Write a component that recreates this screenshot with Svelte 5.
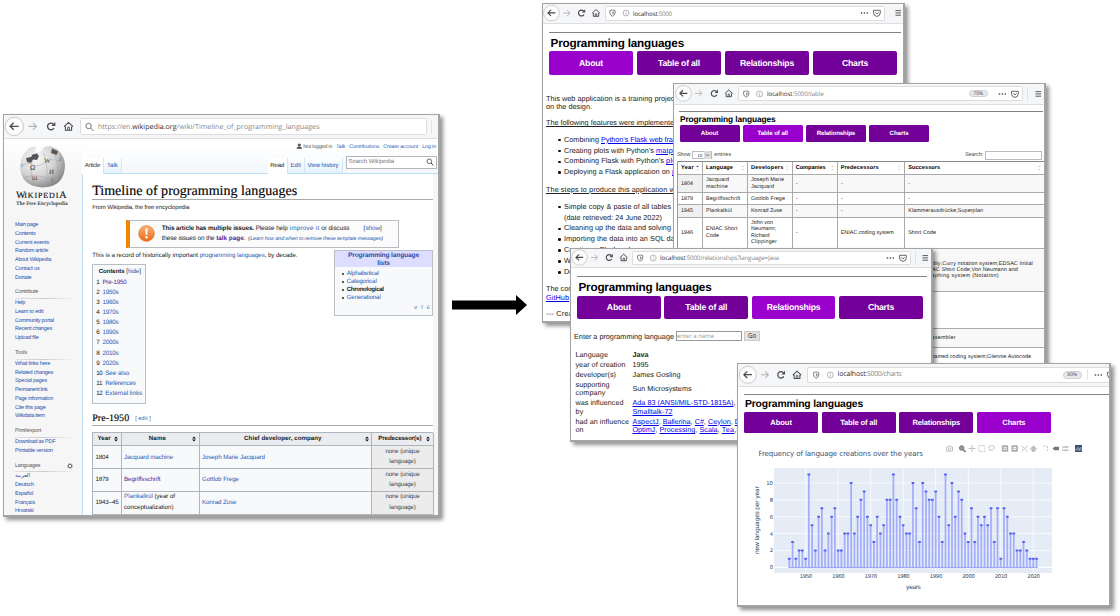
<script>
  // Spreads a run of text over a given width by adjusting its letter spacing.
  function fit(node, width) {
    if (!width) return;
    node.style.letterSpacing = '0px';
    const natural = node.getBoundingClientRect().width;
    const gap = (width - natural) / Math.max(1, node.textContent.length);
    node.style.letterSpacing = gap.toFixed(3) + 'px';
  }

  const sections = [
    { links: [['Main page', 23], ['Contents', 20.5], ['Current events', 34], ['Random article', 33], ['About Wikipedia', 36], ['Contact us', 24.5], ['Donate', 16.3]] },
    { title: 'Contribute', w: 23, links: [['Help', 10], ['Learn to edit', 28.3], ['Community portal', 38.7], ['Recent changes', 37], ['Upload file', 23.5]] },
    { title: 'Tools', w: 12, links: [['What links here', 35], ['Related changes', 38], ['Special pages', 32], ['Permanent link', 32.5], ['Page information', 38], ['Cite this page', 30.5], ['Wikidata item', 29.5]] },
    { title: 'Print/export', w: 26, links: [['Download as PDF', 40.3], ['Printable version', 37.7]] },
    { title: 'Languages', w: 25.3, gear: true, links: [['العربية', 0], ['Deutsch', 19], ['Español', 18], ['Français', 20], ['Hrvatski', 18.7]] }
  ];
  const toc = [['Pre-1950', 24.3], ['1950s', 16], ['1960s', 16], ['1970s', 16], ['1980s', 16], ['1990s', 16], ['2000s', 16], ['2010s', 16], ['2020s', 16], ['See also', 24], ['References', 30.5], ['External links', 37]];
  const tabs = ['About', 'Table of all', 'Relationships', 'Charts'];

  const counts = [1, 3, 1, 2, 2, 1, 11, 5, 2, 6, 7, 2, 4, 6, 7, 2, 2, 4, 4, 10, 4, 6, 8, 9, 6, 5, 3, 6, 4, 5, 8, 8, 11, 8, 6, 5, 4, 4, 10, 7, 3, 10, 9, 8, 8, 9, 6, 3, 11, 5, 10, 6, 9, 8, 4, 3, 7, 3, 6, 5, 6, 5, 7, 3, 7, 1, 7, 6, 4, 4, 2, 2, 3, 2, 1, 1, 1];
  const px = (year) => 67.6 + (year - 1950) * 3.253;
  const py = (n) => 124.3 - n * 8.43;
  const decades = [1950, 1960, 1970, 1980, 1990, 2000, 2010, 2020];

  const rows = [
    { h: 18, c: [['1804'], ['Jacquard', 'machine'], ['Joseph Marie', 'Jacquard'], ['-'], ['-'], ['-']] },
    { h: 12.2, c: [['1879'], ['Begriffsschrift'], ['Gottlob Frege'], ['-'], ['-'], ['-']] },
    { h: 12.3, c: [['1945'], ['Plankalkül'], ['Konrad Zuse'], ['-'], ['-'], ['Klammerausdrücke;Superplan']] },
    { h: 31, c: [['1946'], ['ENIAC Short', 'Code'], ['John von', 'Neumann;', 'Richard', 'Clippinger'], ['-'], ['ENIAC coding system'], ['Short Code']] },
    { h: 43.6, far: 920.7, c: [[], [], [], [], [], ['sembly;Curry notation system;EDSAC Initial', 'ENIAC Short Code;Von Neumann and', 'ographing system (Notation)']] },
    { h: 37, c: [[], [], [], [], [], []] },
    { h: 18.6, far: 926, c: [[], [], [], [], [], ['Assembler']] },
    { h: 19, far: 926, c: [[], [], [], [], [], ['nnamed coding system;Glennie Autocode']] }
  ];
  const widths = {
    'Jacquard': 23, 'machine': 22, 'Joseph Marie': 33, 'Begriffsschrift': 34.5, 'Gottlob Frege': 34, 'Plankalkül': 26, 'Konrad Zuse': 31,
    'Klammerausdrücke;Superplan': 75, 'ENIAC Short': 31.5, 'Neumann;': 25, 'Clippinger': 26, 'ENIAC coding system': 53, 'Short Code': 28,
    'sembly;Curry notation system;EDSAC Initial': 110, 'ENIAC Short Code;Von Neumann and': 95, 'ographing system (Notation)': 76,
    'Assembler': 27.5, 'nnamed coding system;Glennie Autocode': 103
  };
</script>

{#snippet t(text, w, cls)}<span class="t {cls}" use:fit={w}>{text}</span>{/snippet}

{#snippet nav(width, height, cy, xs, s)}
  <svg class="nav" {width} {height} fill="none" stroke="#4a4a4f" stroke-width="1">
    <g transform="translate({xs[0]} {cy}) scale({s})">
      <circle r="8.3" fill="#fdfdfd" stroke="#b8b8bb" stroke-width=".7" />
      <path d="M4-.1H-3.6M-.5-3.3L-3.8-.1L-.5 3.1" stroke-width="1.2" />
    </g>
    <g transform="translate({xs[1]} {cy}) scale({s})" stroke="#b3b3b6"><path d="M-3.6 0H3.4M.5-3.1L3.6 0L.5 3.1" /></g>
    <g transform="translate({xs[2]} {cy}) scale({s})">
      <path d="M2.7 1.5A3.1 3.1 0 1 1 2.2-2.1" stroke-width="1.2" />
      <path d="M3.9-4V-.4H.3Z" fill="#4a4a4f" stroke="none" />
    </g>
    <g transform="translate({xs[3]} {cy}) scale({s})">
      <path d="M-4.1.2L0-3.6L4.1.2M-2.8 0V3.5H2.8V0" /><path d="M-.7 3.4V.8H.8V3.4" stroke-width=".8" />
    </g>
  </svg>
{/snippet}

{#snippet siteIcons(w, a, b)}
  <svg class="nav" width={w} height="14" fill="none" stroke="#66666b" stroke-width=".8">
    <path transform="translate({a} 7)" d="M0-3.1L2.6-2.4V0Q2.4 2.3 0 3.3Q-2.4 2.3-2.6 0V-2.4Z" />
    <path transform="translate({a} 7)" d="M0-1.6V1.8Q1.3.9 1.3-.1V-1.3Z" fill="#77777b" stroke="none" />
    <g transform="translate({b} 7)" stroke="#9a9a9e" stroke-width=".7"><circle r="3" /><path d="M0-.5V1.8M0-1.7V-1" /></g>
  </svg>
{/snippet}

{#snippet pageIcons()}
  <svg class="nav" width="24" height="14" fill="none" stroke="#55555a">
    <path d="M.8 7H2.2M3.7 7H5.1M6.6 7H8" stroke-width="1.3" />
    <path d="M13.5 4.3H20.3V6.8Q20 10.2 16.9 10.4Q13.8 10.2 13.5 6.8ZM15.2 6.3L16.9 8L18.6 6.3" stroke-width=".9" />
  </svg>
{/snippet}

{#snippet menuIcon()}
  <svg class="ham" width="7" height="8"><path d="M.5 1.6H6M.5 3.9H6M.5 6.2H6" stroke="#4a4a4e" stroke-width=".9" /></svg>
{/snippet}

{#snippet tabBar(active, ws)}
  <nav class="tabs">
    {#each tabs as tab, i}<span class:on={i === active}>{@render t(tab, ws[i])}</span>{/each}
  </nav>
{/snippet}

<main class="desk">
  <section class="win wiki">
    <div class="bar">
      {@render nav(76, 23, 11.4, [10.3, 28.5, 47, 64.5], 1.1)}
      <div class="url">
        <svg width="17" height="16" fill="none" stroke="#77777b"><circle cx="7.6" cy="7" r="2.7" /><path d="M9.6 9L12.6 12" /></svg>
        {@render t('https://en.', 34.3)}{@render t('wikipedia.org', 44.3, 'dark')}{@render t('/wiki/Timeline_of_programming_languages', 143)}
      </div>
      <i class="sep"></i>
    </div>
    <div class="wbody">
      <aside>
        <svg class="globe" width="56" height="47">
          <defs><radialGradient id="ball" cx=".35" cy=".3" r=".78"><stop offset="0" stop-color="#f9f9f9" /><stop offset=".55" stop-color="#d3d3d3" /><stop offset="1" stop-color="#7d7d7d" /></radialGradient></defs>
          <path d="M10 7L14 3L19 1.500L21 3L20 7L25 7.500L28 4L29 2L35 1L42 4Q50 11 50 21Q49 42 27.500 42.500Q6 41 5 22Q5.500 13 10 7Z" fill="url(#ball)" />
          <path d="M11 13L16 12L17.500 9.500L22 8.500L24 11L22 15L18 14.500L16 18L12 17ZM37 3.500L43 6.500L41.500 10L36 8Z" fill="#555" />
          <g fill="none" stroke="#a5a5a5" stroke-width=".5"><path d="M5.500 20Q14 17 18 20T31 17T49.500 20M8 33Q18 29 28 32T47 29M17 16Q14 28 20 41M29 8Q34 24 31 42M40 10Q45 22 41 37" /></g>
          <g font-family="Liberation Serif" font-size="7" fill="#444"><text x="15" y="24.500">Ω</text><text x="29" y="18">W</text><text x="34" y="28.500">И</text><text x="17" y="35">ш</text><text x="6.500" y="22" font-size="5">ı</text><text x="44" y="16" font-size="5">J</text><text x="36" y="37" font-size="5">?</text></g>
        </svg>
        <div class="brand">{@render t('W', 8.3, 'big')}{@render t('IKIPEDI', 35)}{@render t('A', 7.8, 'big')}</div>
        <div class="motto">{@render t('The Free Encyclopedia', 51.5)}</div>
        {#each sections as s}
          {#if s.title}
            <h3>{@render t(s.title, s.w)}
              {#if s.gear}<svg width="6" height="6"><circle cx="3" cy="3" r="1.800" fill="none" stroke="#666" stroke-width="1" /><circle cx="3" cy="3" r="2.600" fill="none" stroke="#777" stroke-width=".6" stroke-dasharray="1 1" /></svg>{/if}
            </h3>
          {/if}
          {#each s.links as [l, w]}<a>{@render t(l, w)}</a>{/each}
        {/each}
      </aside>
      <div class="wmain">
        <header>
          <div class="personal">
            <svg width="7" height="7"><circle cx="3.300" cy="2" r="1.600" fill="#555" /><path d="M.5 5.800Q.5 4 2.500 3.700H4.200Q6 4 6 5.800Z" fill="#444" /></svg>
            <span class="muted">{@render t('Not logged in', 29)}</span>{@render t('Talk', 9, 'a')}{@render t('Contributions', 30, 'a')}{@render t('Create account', 35, 'a')}{@render t('Log in', 13.7, 'a')}
          </div>
          <div class="wtabs">
            <span class="cur" style:width="22.5px">{@render t('Article', 15.3)}</span><span style:width="17.5px">{@render t('Talk', 10.8)}</span>
            <b></b>
            <span class="cur" style:width="20.5px">{@render t('Read', 14)}</span><span style:width="16.5px">{@render t('Edit', 10.3)}</span><span style:width="38px">{@render t('View history', 31)}</span>
            <div class="search">{@render t('Search Wikipedia', 45.5)}<svg width="8" height="8" fill="none" stroke="#444"><circle cx="3.300" cy="3.300" r="2.300" stroke-width=".8" /><path d="M5 5L7.300 7.300" /></svg></div>
          </div>
        </header>
        <article>
          <h1>{@render t('Timeline of programming languages', 205)}</h1>
          <p class="from">{@render t('From Wikipedia, the free encyclopedia', 97)}</p>
          <div class="notice">
            <svg width="17" height="17"><defs><linearGradient id="or" x2="0" y2="1"><stop offset="0" stop-color="#fbb16f" /><stop offset="1" stop-color="#e8691a" /></linearGradient></defs><circle cx="8.500" cy="8.500" r="7.900" fill="url(#or)" stroke="#e5803a" stroke-width=".6" /><path d="M7.300 3.500H9.700L9.200 9.900H7.800Z" fill="#fff" /><circle cx="8.500" cy="12.200" r="1.200" fill="#fff" /></svg>
            <div>
              <div class="nl"><b>{@render t('This article has multiple issues.', 92.3)}</b>{@render t(' Please help ', 35.5)}{@render t('improve it', 30, 'a')}{@render t(' or discuss', 30)}<span class="show">{@render t('[', 2)}{@render t('show', 14.5, 'a')}{@render t(']', 2)}</span></div>
              <div class="nl">{@render t('these issues on the ', 54.5)}<b>{@render t('talk page', 27.5, 'v')}</b>{@render t('.', 4.5)}<em>{@render t('(', 2)}{@render t('Learn how and when to remove these template messages', 131, 'a')}{@render t(')', 1.7)}</em></div>
            </div>
          </div>
          <div class="split">
            <div>
              <p class="rec">{@render t('This is a record of historically important ', 107.5)}{@render t('programming languages', 65, 'a')}{@render t(', by decade.', 32.7)}</p>
              <div class="toc">
                <div class="tt"><b>{@render t('Contents', 26)}</b>{@render t('[', 1.7)}{@render t('hide', 11.3, 'a')}{@render t(']', 1.7)}</div>
                {#each toc as [l, w], i}<div>{@render t(i + 1 + '', i > 8 ? 6 : 3.2)}<span class:v={!i} class="a">{@render t(l, w)}</span></div>{/each}
              </div>
            </div>
            <div class="info">
              <div class="ih"><span>{@render t('Programming language', 71)}</span><span>{@render t('lists', 12.5)}</span></div>
              <ul>
                <li class="a">{@render t('Alphabetical', 32)}</li><li class="a">{@render t('Categorical', 30)}</li><li><b>{@render t('Chronological', 37)}</b></li><li class="a">{@render t('Generational', 34)}</li>
              </ul>
              <div class="vte">{@render t('V · T · E', 16)}</div>
            </div>
          </div>
          <h2>{@render t('Pre-1950', 37)}<span class="ed">[ {@render t('edit', 9.7, 'a')} ]</span></h2>
          <div class="wt">
            {#each [['Year', 13.3], ['Name', 17.3], ['Chief developer, company', 77.5], ['Predecessor(s)', 43]] as [l, w]}
              <div class="th"><div class="lab">{@render t(l, w)}</div><svg width="4" height="6"><path d="M2 .5L3.900 2.600H.1ZM2 5.500L.1 3.400H3.900Z" fill="#111" /></svg></div>
            {/each}
            <div>{@render t('1804', 13)}</div><div class="a">{@render t('Jacquard machine', 49)}</div><div class="a">{@render t('Joseph Marie Jacquard', 63)}</div><div class="none"><span>{@render t('none (unique', 34.3)}</span><span>{@render t('language)', 26.5)}</span></div>
            <div>{@render t('1879', 13)}</div><div class="v">{@render t('Begriffsschrift', 36.5)}</div><div class="a">{@render t('Gottlob Frege', 37)}</div><div class="none"><span>{@render t('none (unique', 34.3)}</span><span>{@render t('language)', 26.5)}</span></div>
            <div>{@render t('1943–45', 23)}</div><div class="two"><span>{@render t('Plankalkül', 29, 'a')}{@render t(' (year of', 22)}</span><span>{@render t('conceptualization)', 49.5)}</span></div><div class="a">{@render t('Konrad Zuse', 34.3)}</div><div class="none"><span>{@render t('none (unique', 34.3)}</span><span>{@render t('language)', 26.5)}</span></div>
            <div></div><div></div><div></div><div class="none"></div>
          </div>
        </article>
      </div>
    </div>
  </section>

  <svg class="arrow" width="77" height="24"><path d="M1 7.500H65V2L76 12L65 22V16.500H1Z" fill="#000" /></svg>

  <section class="win app about">
    <div class="bar">
      {@render nav(62, 19, 9, [8.5, 23.7, 38.5, 53], 0.95)}
      <div class="url">{@render siteIcons(27, 6.5, 20)}{@render t('localhost', 24.5, 'dark')}{@render t(':5000', 14.3)}<b></b>{@render pageIcons()}</div>
      <i class="sep"></i>{@render menuIcon()}
    </div>
    <hr />
    <h4>{@render t('Programming languages', 133.5)}</h4>
    {@render tabBar(0, [24, 42, 54, 26])}
    <div class="text">
      <p>{@render t('This web application is a training project', 130.5)}<br />{@render t('on the design.', 46)}</p>
      <p class="u">{@render t('The following features were implemented', 132)}</p>
      <ul>
        <li>{@render t('Combining ', 37)}{@render t("Python's Flask web framework", 97, 'k')}</li>
        <li>{@render t("Creating plots with Python's ", 92)}{@render t('matplotlib', 33.5, 'k')}</li>
        <li>{@render t("Combining Flask with Python's ", 102)}{@render t('plotly', 19, 'k')}</li>
        <li>{@render t('Deploying a Flask application on ', 108)}{@render t('python', 22, 'k')}</li>
      </ul>
      <p class="u s2">{@render t('The steps to produce this application were', 139.5)}</p>
      <ul>
        <li>{@render t('Simple copy & paste of all tables from', 124)}</li>
        <li class="bare">{@render t('(date retrieved: 24 June 2022)', 98)}</li>
        <li>{@render t('Cleaning up the data and solving', 107)}</li>
        <li>{@render t('Importing the data into an SQL data', 117)}</li>
        <li>Creating a Flask web</li>
        <li>Writing the</li>
        <li>Deploying</li>
      </ul>
      <p class="s3">{@render t('The code is', 37.5)}<br />{@render t('GitHub', 23, 'k')}</p>
      <p class="s4">{@render t('--- Created', 38)}</p>
    </div>
  </section>

  <section class="win app table">
    <div class="bar">
      {@render nav(64, 20, 9.4, [9.5, 24.5, 40.3, 54.8], 0.95)}
      <div class="url">{@render siteIcons(28, 7.2, 20.5)}{@render t('localhost', 25.5, 'dark')}{@render t(':5000/table', 31)}<b></b><em>70%</em>{@render pageIcons()}</div>
      <i class="sep"></i>{@render menuIcon()}
    </div>
    <hr />
    <h4>{@render t('Programming languages', 95.5)}</h4>
    {@render tabBar(1, [17.5, 30.5, 38.5, 19])}
    <div class="ctl"><span>{@render t('Show', 13.3)}</span><i class="sel"><s>10</s><svg width="7" height="8"><rect width="7" height="8" fill="#ddd" /><path d="M1.800 3.200L3.500 5L5.200 3.200" fill="none" stroke="#555" stroke-width=".7" /></svg></i><span>{@render t('entries', 17)}</span><b></b><span>{@render t('Search:', 18)}</span><i class="inp"></i></div>
    <div class="dt">
      {#each [['Year', 13], ['Language', 27], ['Developers', 32.5], ['Companies', 30], ['Predecessors', 38], ['Successors', 32]] as [l, w], i}
        <div class="hd">{@render t(l, w)}<svg width="3" height="6"><path d="M1.500 .6L2.800 2H.2Z" fill={i ? '#ccc' : '#444'} /><path d="M1.500 5.400L.2 4H2.800Z" fill={i ? '#ccc' : '#ddd'} /></svg></div>
      {/each}
      {#each rows as r, ri}
        {#each r.c as cell, ci}
          <div class:odd={ri % 2 === 0} class:yr={ci === 0} style:height="{r.h}px" style:padding-left={ci === 5 && r.far ? r.far - 903 + 'px' : undefined}>
            {#each cell as line}<span>{@render t(line, widths[line])}</span>{/each}
          </div>
        {/each}
      {/each}
    </div>
  </section>

  <section class="win app rel">
    <div class="bar">
      {@render nav(61, 18, 8.5, [8.5, 23.3, 38.2, 52.7], 0.93)}
      <div class="url">{@render siteIcons(27, 7.2, 20.2)}{@render t('localhost', 25.3, 'dark')}{@render t(':5000/relationships?language=Java', 93.5)}<b></b>{@render pageIcons()}</div>
      <i class="sep"></i>{@render menuIcon()}
    </div>
    <hr />
    <h4>{@render t('Programming languages', 133)}</h4>
    {@render tabBar(2, [24, 42, 53.5, 26])}
    <div class="form">{@render t('Enter a programming language', 100)}<i>{@render t('enter a name', 37)}</i><button>Go</button></div>
    <dl>
      <dt>{@render t('Language', 32.5)}</dt><dd><b>{@render t('Java', 16)}</b></dd>
      <dt>{@render t('year of creation', 50)}</dt><dd>{@render t('1995', 16)}</dd>
      <dt>{@render t('developer(s)', 40.5)}</dt><dd>{@render t('James Gosling', 48)}</dd>
      <dt class="w">{@render t('supporting', 34)}<br />{@render t('company', 30)}</dt><dd class="w one">{@render t('Sun Microsystems', 59)}</dd>
      <dt class="w">{@render t('was influenced', 48)}<br />{@render t('by', 8)}</dt><dd class="w">{@render t('Ada 83 (ANSI/MIL-STD-1815A)', 101, 'k')}, <br />{@render t('Smalltalk-72', 40, 'k')}</dd>
      <dt class="w">{@render t('had an influence', 53.5)}<br />{@render t('on', 8)}</dt>
      <dd class="w">{@render t('AspectJ', 26.3, 'k')}{@render t(', ', 4)}{@render t('Ballerina', 27.7, 'k')}{@render t(', ', 4.3)}{@render t('C#', 9, 'k')}{@render t(', ', 4.3)}{@render t('Ceylon', 22.7, 'k')}{@render t(', ', 4)}{@render t('Dart', 14, 'k')}<br />{@render t('OptimJ', 22.7, 'k')}{@render t(', ', 4.3)}{@render t('Processing', 35.7, 'k')}{@render t(', ', 4.3)}{@render t('Scala', 18, 'k')}{@render t(', ', 4.3)}{@render t('Tea', 12.7, 'k')}, </dd>
    </dl>
  </section>

  <section class="win app charts">
    <div class="bar">
      {@render nav(69, 21, 10.8, [9.8, 26.7, 43, 59], 1.03)}
      <div class="url">{@render siteIcons(29.5, 8.2, 22.3)}{@render t('localhost', 28, 'dark')}{@render t(':5000/charts', 36)}<b></b><em>80%</em><i class="sep"></i>{@render pageIcons()}</div>
    </div>
    <hr />
    <h4>{@render t('Programming languages', 118)}</h4>
    {@render tabBar(3, [21.5, 37, 47.5, 23])}
    <svg class="plot" width="372" height="163" font-family="DejaVu Sans" fill="#2a3f5f" text-rendering="geometricPrecision">
      <text x="20.500" y="13" font-size="7.200" textLength="164.500" opacity=".9">Frequency of language creations over the years</text>
      <g stroke="#bbb" fill="none" stroke-width=".9">
        <path d="M208.500 4H210L210.700 3H212.600L213.300 4H214.500V8.200H208.500Z" /><circle cx="211.600" cy="6" r="1.200" />
        <circle cx="223.700" cy="5" r="2.300" fill="#999" stroke="#777" /><path d="M225.500 7L227.500 9" stroke="#666" stroke-width="1.500" />
        <path d="M234 2V9M230.500 5.500H237.500" />
        <rect x="241" y="2.500" width="6" height="6" stroke-dasharray="1.200 .8" />
        <path d="M251.500 8.500L252.500 7Q249.500 5.500 251 3.500Q253.500 1.500 256 3.500Q257.500 6 254.500 6.800L252.500 7" />
        <rect x="264.700" y="3.200" width="4.600" height="4.600" stroke-width="1.700" stroke="#aaa" /><path d="M267 4.500V6.500M266 5.500H268" />
        <rect x="274.400" y="3.200" width="4.600" height="4.600" stroke-width="1.700" stroke="#aaa" /><path d="M275.500 5.500H278" />
        <path d="M283.500 2.500L289.500 8.500M289.500 2.500L283.500 8.500" />
        <path d="M292.500 5.800L295.500 3L298.500 5.800ZM294 6V8.300H297V6" fill="#bbb" />
        <path d="M305 3H309.500V8" stroke-dasharray="1.500 1" />
        <path d="M314.500 5.500L316.500 3.800H321V7.200H316.500Z" fill="#777" stroke="none" />
        <path d="M324.500 4H330.500M324.500 7.200H330.500" stroke-width="1.500" />
      </g>
      <rect x="337" y="2" width="7" height="7" fill="#3f4f75" /><path d="M338.300 7.500V5.500M340 7.500V4M341.500 7.500V5.500M343 7.500V4" stroke="#dfe6f5" stroke-width=".7" />
      <rect x="36" y="25" width="278" height="105" fill="#e5ecf6" />
      <g stroke="#fff" stroke-width=".7">
        {#each [2, 4, 6, 8, 10] as n}<path d="M36 {py(n)}H314" />{/each}
        {#each decades as d}<path d="M{px(d)} 25V130" />{/each}
        <path d="M36 {py(0)}H314" stroke-width="1.200" />
      </g>
      {#each counts as n, i}
        <rect x={px(1945 + i) - 0.85} y={py(n)} width="1.700" height={n * 8.43 + 0.3} fill="#a3adfb" />
        <rect x={px(1945 + i) - 1.5} y={py(n) - 1} width="3" height="2" rx=".8" fill="#5560f5" />
      {/each}
      <rect x={px(1945) - 1} y={py(0) - 0.4} width={px(2021) - px(1945) + 2} height=".9" fill="#8f9af8" />
      <g font-size="5.300">
        {#each [0, 2, 4, 6, 8, 10] as n}<text x="35" y={py(n) + 2} text-anchor="end">{n}</text>{/each}
        {#each decades as d}<text x={px(d) + 0.3} y="135" text-anchor="middle" textLength="12.500">{d}</text>{/each}
      </g>
      <text x="168" y="146" font-size="6" textLength="15">years</text>
      <text transform="translate(20.500 111) rotate(-90)" font-size="6" textLength="68">new languages per year</text>
    </svg>
  </section>
</main>

<style>
  :global(body) { background: #fff; overflow: hidden; }
  .desk { position: relative; width: 1120px; height: 616px; overflow: hidden; background: #fff; font-family: "Liberation Sans", Arial, sans-serif; text-rendering: geometricPrecision; color: #222; }
  .desk *, .desk { box-sizing: border-box; }
  .t { display: inline-block; white-space: pre; }
  .a { color: #2a5bb8; }
  .v { color: #4a2b9c; }
  .k { color: #00e; text-decoration: underline; text-decoration-thickness: .7px; text-underline-offset: 1px; }
  h1, h2, h3, h4, p, ul, dl, dd, hr { margin: 0; padding: 0; }
  ul { list-style: none; }
  svg { flex: none; display: block; }
  .win { position: absolute; display: flex; flex-direction: column; background: #fff; border: 1px solid #a3a3a3; border-right-width: 2px; border-bottom-width: 2px; box-shadow: 3px 3px 4px rgba(0, 0, 0, .43); overflow: hidden; }
  .arrow { position: absolute; left: 451px; top: 293px; }
  .bar { display: flex; align-items: center; background: #f5f6f7; border-bottom: 1px solid #dedee0; flex: none; }
  .url { flex: 1; display: flex; align-items: center; height: 15px; background: #fff; border: 1px solid #dcdcdf; border-radius: 1.5px; font: 6.2px "Open Sans", sans-serif; color: #858589; overflow: hidden; }
  .url b { flex: 1; }
  .url em { font: 5px "Open Sans", sans-serif; background: #e8e8ea; border: .5px solid #d0d0d3; border-radius: 4px; width: 18.5px; height: 7px; line-height: 6px; text-align: center; margin-right: 10.5px; color: #444; }
  .dark { color: #29292c; }
  .sep { width: 1px; height: 14px; background: #e3e3e5; margin-left: 4px; }
  .ham { margin: 0 2.5px 0 6.5px; }

  .wiki { left: 3px; top: 114px; width: 437px; height: 403px; }
  .wiki .bar { height: 24px; }
  .wiki .url { height: 17px; flex: 0 0 346.5px; font-size: 7.1px; }
  .wbody { display: flex; flex: 1; min-height: 0; background: #f6f6f6; }
  aside { width: 77.7px; flex: none; padding-left: 11px; font-size: 5.5px; background: linear-gradient(#fff, #f6f6f6 35px); }
  .globe { margin: 6px 0 0; }
  .brand { font: 8px/10px "Liberation Serif", serif; color: #111; padding-left: 1px; display: flex; align-items: baseline; height: 9px; margin-top: -1px; -webkit-text-stroke: .15px #111; }
  .big { font-size: 10px; }
  .motto { font: 5.3px/7px "Liberation Serif", serif; padding-left: 1.3px; height: 21px; padding-top: .5px; color: #111; -webkit-text-stroke: .1px #111; }
  aside a { display: block; height: 8.75px; line-height: 8.75px; color: #1f4fae; }
  aside h3 { display: flex; justify-content: space-between; align-items: center; font: 5.5px/8.75px "Liberation Sans", sans-serif; height: 11.3px; margin-top: 5.4px; margin-bottom: .2px; color: #555; border-bottom: .7px solid; border-image: linear-gradient(90deg, #e2e2e2, #ccc 50%, #f3f3f3) 1; margin-right: 8.5px; }
  .wmain { flex: 1; min-width: 0; display: flex; flex-direction: column; }
  .wmain header { height: 35px; background: linear-gradient(#fff 20%, #f3f7fb); flex: none; display: flex; flex-direction: column; border-bottom: 1px solid #bfdff5; }
  .personal { display: flex; justify-content: flex-end; align-items: center; gap: 4px; height: 15px; font-size: 5.2px; padding: 1px 2px 0 0; }
  .muted { margin-left: -3.5px; color: #555; }
  .wtabs { display: flex; height: 20px; padding-top: 4px; align-items: stretch; font-size: 6px; }
  .wtabs > span { display: flex; justify-content: center; align-items: center; padding-top: 1px; background: linear-gradient(#fff, #e3f1fb); color: #1f4fae; border-right: 1px solid #cfe6f7; }
  .wtabs > span.cur { background: #fff; color: #222; margin-bottom: -1px; }
  .wtabs b { flex: 1; }
  .search { width: 91px; height: 13px; margin: -2px 1.5px 0 3px; border: 1px solid #b5b5b5; background: #fff; display: flex; justify-content: space-between; align-items: center; padding: 0 2px; color: #777; }
  article { flex: 1; min-height: 0; background: #fff; border-left: 1px solid #bfdff5; padding-left: 9.5px; width: 351.300px; font-size: 6px; }
  h1 { font: 14px/17px "Liberation Serif", serif; height: 25.8px; padding-top: 8.500px; border-bottom: .8px solid #aaa; color: #000; -webkit-text-stroke: .15px #000; }
  .from { height: 20px; line-height: 17px; }
  .notice { margin-left: 34px; width: 273px; height: 28px; border: 1px solid #b7bcc3; border-left: 4px solid #f28500; background: #fbfbfb; display: flex; align-items: center; padding-left: 7.5px; gap: 7px; }
  .nl { display: flex; height: 10.3px; line-height: 10.3px; font-size: 6.4px; }
  .nl em { font-size: 5.3px; font-style: italic; }
  .show { margin-left: 14px; }
  .split { display: flex; justify-content: space-between; margin-top: 2.6px; height: 153.7px; }
  .rec { height: 13.3px; line-height: 11.500px; white-space: nowrap; font-size: 6.200px; width: 230px; }
  .toc { width: 54px; height: 140.3px; border: 1px solid #b9bfc6; background: #f8f9fa; font-size: 6.300px; line-height: 10.05px; padding: 2.500px 0 0 3px; white-space: nowrap; }
  .toc > div { height: 10.05px; display: flex; gap: 3px; }
  .toc .tt { padding-left: 2.500px; gap: 0; font-size: 6.100px; height: 11px; }
  .tt b { margin-right: 1.500px; }
  .info { width: 99px; height: 65.500px; border: 1px solid #b9bfc6; background: #f8f9fa; flex: none; font-size: 6.200px; line-height: 8.15px; }
  .ih { background: #ddf; height: 15.300px; font-size: 6.600px; font-weight: bold; display: flex; flex-direction: column; align-items: center; line-height: 7.300px; padding-top: 1px; color: #1f4fae; }
  .info ul { padding: 3px 0 0 11.500px; }
  .info li { height: 8.15px; display: flex; align-items: center; }
  .info li::before { content: ''; width: 2.200px; height: 2.200px; margin: 0 2.500px 0 -4.500px; border-radius: 50%; background: #222; }
  .vte { text-align: right; padding: 2.300px 2px 0 0; font-size: 4.800px; color: #1f4fae; }
  h2 { font: 10px/12px "Liberation Serif", serif; height: 12.500px; margin-top: 9.500px; border-bottom: .8px solid #aaa; color: #000; display: flex; align-items: center; -webkit-text-stroke: .15px #000; }
  .ed { font: 5.400px "Liberation Sans", sans-serif; -webkit-text-stroke: 0; margin-left: 6px; color: #555; }
  .wt { margin-top: 5.500px; display: grid; grid-template-columns: 28.500px 78px 172.800px 61.200px; grid-template-rows: 13.600px 22.800px 22.800px 22.800px 8px; border-left: 1px solid #b0b5bc; border-top: 1px solid #b0b5bc; font-size: 6.200px; }
  .wt > div { border-right: 1px solid #b0b5bc; border-bottom: 1px solid #b0b5bc; background: #f8f9fa; display: flex; align-items: center; padding-left: 2.300px; }
  .wt > .th { background: #eaecf0; font-weight: bold; padding: 0 2.500px 0 1px; }
  .lab { flex: 1; text-align: center; }
  .wt .none { background: #ececec; color: #444; flex-direction: column; justify-content: center; line-height: 10.300px; padding: 0; }
  .wt .two { flex-direction: column; align-items: flex-start; justify-content: center; line-height: 10.300px; }

  .app hr { border: 0; height: 1px; background: #828282; flex: none; }
  .app h4 { color: #000; font-weight: bold; white-space: nowrap; flex: none; }
  .tabs { display: flex; flex: none; }
  .tabs > span { background: #730099; color: #fff; font-weight: bold; display: flex; align-items: center; justify-content: center; border-radius: 2px; }
  .tabs > span.on { background: #9900cc; }

  .about { left: 542px; top: 3px; width: 363px; height: 320px; border-left-width: 1.500px; }
  .about .bar { height: 19.700px; }
  .about .url { flex: 0 0 279.500px; }
  .about hr { margin: 8.500px 2px 0 5.500px; }
  .about h4 { font-size: 11.700px; line-height: 14px; margin: 3.500px 0 0 7.500px; height: 14.800px; }
  .about .tabs { gap: 4px; margin-left: 6px; font-size: 8.700px; }
  .about .tabs > span { width: 84px; height: 24px; }
  .text { font-size: 7.300px; line-height: 8.400px; margin: 19.500px 0 0 3px; white-space: nowrap; }
  .text p { height: 24.200px; }
  .text p.u { height: 15.500px; }
  .u .t { text-decoration: underline; text-decoration-thickness: .7px; }
  .text ul { padding-left: 18px; line-height: 10.900px; }
  .text li { height: 10.900px; display: flex; align-items: center; }
  .text li::before { content: ''; width: 2.600px; height: 2.600px; border-radius: 50%; background: #111; margin: 0 3.300px 0 -5.900px; }
  .text li.bare::before { visibility: hidden; }
  .text p.s2 { margin-top: 7.500px; height: 15.900px; }
  .text p.s3 { margin-top: 7.500px; height: 25px; }

  .table { left: 673px; top: 83px; width: 373px; height: 292px; }
  .table .bar { height: 20.500px; }
  .table .url { flex: 0 0 285px; }
  .table hr { margin: 6px 1.500px 0 5px; }
  .table h4 { font-size: 8.400px; line-height: 10px; margin: 2.500px 0 0 6px; height: 10.500px; }
  .table .tabs { gap: 3.200px; margin-left: 5.500px; font-size: 6.200px; }
  .table .tabs > span { width: 60px; height: 17px; border-radius: 1.500px; }
  .ctl { display: flex; align-items: center; gap: 2px; height: 11px; margin: 8px 2px 0 3px; font-size: 5.500px; color: #444; flex: none; }
  .ctl b { flex: 1; }
  .sel { display: flex; border: .5px solid #bbb; height: 8.500px; width: 20px; justify-content: space-between; font-style: normal; align-items: center; padding-left: 4px; }
  .sel s { text-decoration: none; font-size: 4.500px; }
  .inp { width: 57px; height: 9px; border: .6px solid #bbb; }
  .dt { display: grid; grid-template-columns: 25px 45px 44.700px 45px 67.500px 139.500px; margin-left: 3px; border-left: 1px solid #999; border-top: 1px solid #888; font-size: 5.400px; line-height: 6.300px; flex: none; width: 367px; }
  .dt > div { display: flex; flex-direction: column; justify-content: center; padding-left: 3px; border-right: 1px solid #aaa; border-bottom: 1px solid #aaa; white-space: nowrap; overflow: hidden; color: #222; }
  .dt > .hd { height: 13.700px; flex-direction: row; justify-content: space-between; align-items: center; font-weight: bold; color: #000; font-size: 5.600px; padding-right: 3px; }
  .dt .odd { background: #f8f8f8; }
  .dt .odd.yr { background: #f0f0f0; }

  .rel { left: 570px; top: 248px; width: 363px; height: 194px; }
  .rel .bar { height: 18.500px; }
  .rel .url { flex: 0 0 278.500px; height: 13.500px; }
  .rel hr { margin: 8.500px 4px 0 6px; }
  .rel h4 { font-size: 11.700px; line-height: 14px; margin: 3.500px 0 0 7.500px; height: 15px; }
  .rel .tabs { gap: 3.700px; margin-left: 6px; font-size: 8.700px; }
  .rel .tabs > span { width: 83.700px; height: 23.700px; }
  .form { display: flex; align-items: center; margin: 12px 0 0 3px; height: 10px; font-size: 7.300px; flex: none; }
  .form i { font: 6px "Open Sans", sans-serif; border: .7px solid #999; width: 66px; height: 10px; line-height: 8px; margin: 0 2px; color: #999; }
  .form button { font: 6.200px "Open Sans", sans-serif; border: .7px solid #ccc; background: #e2e2e2; width: 16.500px; height: 9.500px; padding: 0; line-height: 8px; color: #222; }
  dl { display: grid; grid-template-columns: 57px 1fr; margin: 8.500px 0 0 4.500px; font-size: 7.200px; line-height: 10px; white-space: nowrap; color: #222; }
  dt.w, dd.w { line-height: 8.400px; height: 18.500px; padding-top: 1.200px; }
  dd.w.one { padding-top: 5px; }

  .charts { left: 737px; top: 363px; width: 374px; height: 244px; border-left-width: 1.500px; border-top-width: 1.500px; }
  .charts .bar { height: 22.500px; }
  .charts .url { height: 15.500px; font-size: 6.900px; border-right: 0; border-radius: 2px 0 0 2px; }
  .charts .url em { width: 19.500px; height: 8px; line-height: 7px; margin-right: 2px; }
  .charts .url .sep { margin: 0 6px 0 3px; height: 11px; }
  .charts .url :global(svg:last-child) { margin-right: -9px; }
  .charts hr { margin: 7.500px 0 0 5.500px; }
  .charts h4 { font-size: 10.350px; line-height: 12px; margin: 3.500px 0 0 7px; height: 13px; }
  .charts .tabs { gap: 3.400px; margin-left: 6px; font-size: 7.600px; }
  .charts .tabs > span { width: 74.200px; height: 21px; border-radius: 1.500px; }
  .plot { margin-top: 10px; }
</style>
